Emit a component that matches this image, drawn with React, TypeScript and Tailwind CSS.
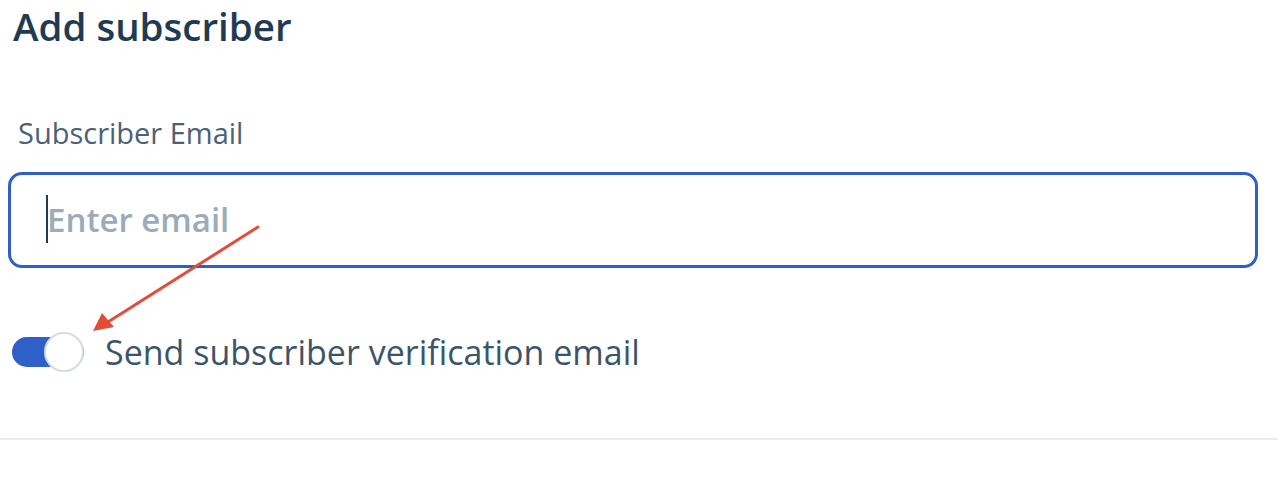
import React from 'react';

export default function App() {
  const [email, setEmail] = React.useState('');
  const [verify, setVerify] = React.useState(true);

  return (
    <div
      className="relative h-[489px] w-[1278px] bg-white"
      style={{ fontFamily: '"Open Sans", "Noto Sans", sans-serif' }}
    >
      <div className="px-[8px]">
        <h1 className="pl-[5px] text-[38.5px] font-semibold leading-[53px] text-[#1f3a52]">Add subscriber</h1>

        <label className="mt-[62px] block pl-[10px] text-[29px] leading-[36px] text-[#4b6175]">Subscriber Email</label>

        <div className="relative mt-[21px] flex h-[96px] w-[1250px] items-center rounded-[14px] border-[3px] border-[#2f5fc9] pl-[36px] pr-[20px]">
          {email === '' && <span className="absolute left-[35px] top-[20px] h-[48px] w-[2px] bg-[#1f3a52]" />}
          <input
            autoFocus
            value={email}
            onChange={(e) => setEmail(e.target.value)}
            placeholder="Enter email"
            className="w-full bg-transparent text-[33px] font-semibold text-[#1f3a52] caret-[#1f3a52] outline-none placeholder:text-[#9babb9]"
          />
        </div>

        <div className="mt-[64px] flex items-center gap-[21px] pl-[4px]">
          <button
            type="button"
            onClick={() => setVerify(!verify)}
            className={
              'relative flex h-[30px] w-[72px] shrink-0 items-center rounded-full ' +
              (verify ? 'bg-[#2f5fc9]' : 'bg-[#d5dce3]')
            }
          >
            <span
              className={
                'absolute top-[-5px] h-[40px] w-[40px] rounded-full border-2 border-[#d3dbe4] bg-white ' +
                (verify ? 'right-0' : 'left-0')
              }
            />
          </button>
          <span className="text-[34px] leading-[40px] text-[#3c5469]">Send subscriber verification email</span>
        </div>
      </div>

      <div className="mt-[66px] h-[2px] w-full bg-[#ececec]" />

      {/* annotation arrow */}
      <svg className="pointer-events-none absolute left-0 top-0" width="1278" height="489">
        <path d="M258 227 L108 322" stroke="#e24d38" strokeWidth="3" strokeLinecap="round" />
        <path d="M93 331 L102 313 L114 327 Z" fill="#e24d38" />
      </svg>
    </div>
  );
}
